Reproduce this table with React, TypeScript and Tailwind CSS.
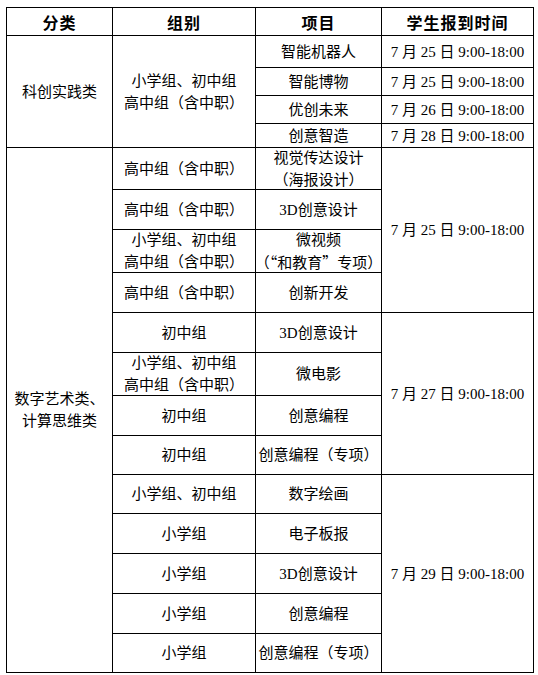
const cjk = "font-['Liberation_Serif','Noto_Sans_CJK_SC',serif]";

const cell = "flex flex-col items-center justify-center bg-white text-center text-[15px] leading-[22px] text-black whitespace-nowrap";

function Q({ children }: { children: string }) {
	// full-width quotes like the original SimSun glyphs
	return <span className="font-['Noto_Sans_CJK_SC',sans-serif]">{children}</span>;
}

function Cell({ className = "", children }: { className?: string; children: React.ReactNode }) {
	return <div className={`${cell} ${className}`}>{children}</div>;
}

function Head({ children }: { children: React.ReactNode }) {
	return (
		<div className="flex items-center justify-center bg-white text-[16px] font-bold tracking-[1px] text-black font-['Noto_Sans_CJK_SC',sans-serif]">
			{children}
		</div>
	);
}

const both = (
	<>
		<span>小学组、初中组</span>
		<span>高中组（含中职）</span>
	</>
);

export default function App() {
	return (
		<div className={`min-h-screen bg-white pl-[6px] pt-[7px] ${cjk}`}>
			<div className="grid w-[528px] grid-cols-[105px_142px_125px_151px] grid-rows-[27px_31px_27px_27px_23px_41px_39px_42px_39px_39px_42px_39px_38px_38px_39px_39px_39px_38px] gap-px bg-black p-px">
				<Head>分类</Head>
				<Head>组别</Head>
				<Head>项目</Head>
				<Head>学生报到时间</Head>

				{/* 科创实践类 */}
				<Cell className="row-span-4">科创实践类</Cell>
				<Cell className="row-span-4">{both}</Cell>
				<Cell>智能机器人</Cell>
				<Cell>7 月 25 日 9:00-18:00</Cell>
				<Cell>智能博物</Cell>
				<Cell>7 月 25 日 9:00-18:00</Cell>
				<Cell>优创未来</Cell>
				<Cell>7 月 26 日 9:00-18:00</Cell>
				<Cell>创意智造</Cell>
				<Cell>7 月 28 日 9:00-18:00</Cell>

				{/* 数字艺术类、计算思维类 */}
				<Cell className="row-span-13">
					<span>数字艺术类、</span>
					<span>计算思维类</span>
				</Cell>
				<Cell>高中组（含中职）</Cell>
				<Cell>
					<span>视觉传达设计</span>
					<span>（海报设计）</span>
				</Cell>
				<Cell className="row-span-4">7 月 25 日 9:00-18:00</Cell>
				<Cell>高中组（含中职）</Cell>
				<Cell>3D创意设计</Cell>
				<Cell>{both}</Cell>
				<Cell>
					<span>微视频</span>
					<span>
						（<Q>“</Q>和教育<Q>”</Q>专项）
					</span>
				</Cell>
				<Cell>高中组（含中职）</Cell>
				<Cell>创新开发</Cell>

				<Cell>初中组</Cell>
				<Cell>3D创意设计</Cell>
				<Cell className="row-span-4">7 月 27 日 9:00-18:00</Cell>
				<Cell>{both}</Cell>
				<Cell>微电影</Cell>
				<Cell>初中组</Cell>
				<Cell>创意编程</Cell>
				<Cell>初中组</Cell>
				<Cell>创意编程（专项）</Cell>

				<Cell>小学组、初中组</Cell>
				<Cell>数字绘画</Cell>
				<Cell className="row-span-5">7 月 29 日 9:00-18:00</Cell>
				<Cell>小学组</Cell>
				<Cell>电子板报</Cell>
				<Cell>小学组</Cell>
				<Cell>3D创意设计</Cell>
				<Cell>小学组</Cell>
				<Cell>创意编程</Cell>
				<Cell>小学组</Cell>
				<Cell>创意编程（专项）</Cell>
			</div>
		</div>
	);
}
